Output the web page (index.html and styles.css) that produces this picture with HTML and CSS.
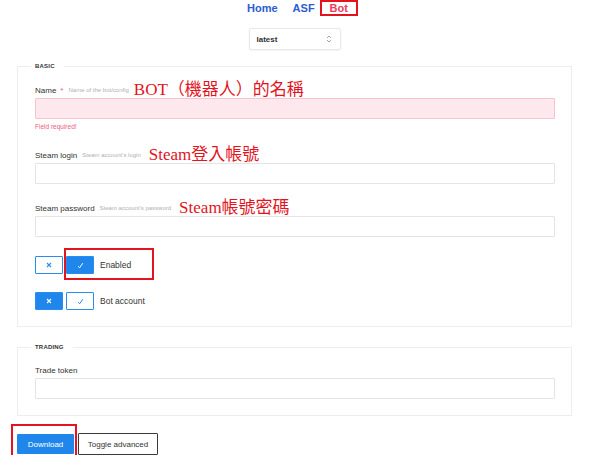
FILE: index.html
```html
<!DOCTYPE html>
<html>
<head>
<meta charset="utf-8">
<link rel="stylesheet" href="styles.css">
</head>
<body>
<div class="page">
  <nav class="nav">
    <a class="nav-link">Home</a>
    <a class="nav-link asf">ASF</a>
    <a class="nav-link active">Bot</a>
  </nav>

  <div class="select">
    <span class="select-text">latest</span>
    <svg class="select-icon" width="6" height="8" viewBox="0 0 6 8"><path d="M1 3 L3 1 L5 3 M1 5 L3 7 L5 5" fill="none" stroke="#9a9a9a" stroke-width="0.9"/></svg>
  </div>

  <fieldset class="group basic">
    <legend class="legend">BASIC</legend>

    <div class="field field-name">
      <div class="label"><span class="label-text">Name</span><span class="star">*</span><span class="hint">Name of the bot/config</span><span class="note">BOT（機器人）的名稱</span></div>
      <input class="input invalid" type="text">
      <div class="error">Field required!</div>
    </div>

    <div class="field field-login">
      <div class="label"><span class="label-text">Steam login</span><span class="hint">Steam account's login</span><span class="note note-steam">Steam登入帳號</span></div>
      <input class="input" type="text">
    </div>

    <div class="field field-pass">
      <div class="label"><span class="label-text">Steam password</span><span class="hint">Steam account's password</span><span class="note note-steam">Steam帳號密碼</span></div>
      <input class="input" type="text">
    </div>

    <div class="toggle-row first">
      <span class="tbtn outline"><svg width="6" height="6" viewBox="0 0 6 6"><path d="M1 1 L5 5 M5 1 L1 5" stroke="#2a8cf0" stroke-width="1.1"/></svg></span>
      <span class="tbtn filled"><svg width="7" height="7" viewBox="0 0 7 7"><path d="M1.2 4.2 L2.6 5.8 L5.8 1.2" fill="none" stroke="#fff" stroke-width="1"/></svg></span>
      <span class="toggle-text">Enabled</span>
      <span class="mark mark-enabled"></span>
    </div>

    <div class="toggle-row">
      <span class="tbtn filled"><svg width="6" height="6" viewBox="0 0 6 6"><path d="M1 1 L5 5 M5 1 L1 5" stroke="#fff" stroke-width="1.1"/></svg></span>
      <span class="tbtn outline"><svg width="7" height="7" viewBox="0 0 7 7"><path d="M1.2 4.2 L2.6 5.8 L5.8 1.2" fill="none" stroke="#2a8cf0" stroke-width="1"/></svg></span>
      <span class="toggle-text">Bot account</span>
    </div>
  </fieldset>

  <fieldset class="group trading">
    <legend class="legend">TRADING</legend>
    <div class="field field-trade">
      <div class="label"><span class="label-text">Trade token</span></div>
      <input class="input" type="text">
    </div>
  </fieldset>

  <div class="actions">
    <div class="download-wrap">
      <button class="btn btn-primary">Download</button>
      <span class="mark mark-download"></span>
    </div>
    <button class="btn btn-outline">Toggle advanced</button>
  </div>
</div>
</body>
</html>
```

FILE: styles.css
```css
body {
  margin: 0;
  background: #fff;
  font-family: "Liberation Sans", Arial, sans-serif;
  color: #333;
}

.page {
  margin-left: 17px;
  width: 555px;
}

.nav {
  display: flex;
  justify-content: center;
  align-items: center;
  height: 16px;
  padding-left: 16px;
}

.nav-link {
  font-size: 11px;
  font-weight: bold;
  color: #2b5cd0;
  line-height: 12px;
}

.asf {
  margin-left: 15px;
}

.active {
  margin-left: 5px;
  color: #ef3a5d;
  border: 2px solid #e3141e;
  padding: 0 8px;
  height: 16px;
  box-sizing: border-box;
}

.select {
  margin: 12px auto 0;
  width: 92px;
  height: 22px;
  box-sizing: border-box;
  border: 1px solid #e8e8e8;
  border-radius: 2px;
  box-shadow: 0 1px 2px rgba(0,0,0,0.05);
  display: flex;
  align-items: center;
  justify-content: space-between;
  padding: 0 8px 0 7px;
}

.select-text {
  font-size: 8px;
  font-weight: bold;
  color: #333;
}

.select-icon {
  display: block;
}

.group {
  margin: 11px 0 0;
  padding: 0 16px 0 17px;
  border: 1px solid #ededed;
  min-width: 0;
}

.basic {
  padding-bottom: 16px;
}

.trading {
  margin-top: 15px;
  padding-bottom: 16px;
}

.legend {
  font-size: 6px;
  font-weight: bold;
  line-height: 10px;
  color: #333;
  padding: 0 9px 0 4px;
  margin-left: -4px;
  letter-spacing: 0.2px;
}

.field-name {
  margin-top: 11px;
}

.field-login {
  margin-top: 15px;
}

.field-pass {
  margin-top: 16px;
}

.field-trade {
  margin-top: 10px;
}

.label {
  display: flex;
  align-items: center;
  height: 16px;
  white-space: nowrap;
}

.label-text {
  font-size: 8px;
  color: #333;
}

.star {
  font-size: 8px;
  color: #f0587c;
  margin-left: 4px;
}

.hint {
  font-size: 6px;
  color: #b0b0b0;
  margin-left: 5px;
}

.note {
  font-family: "Liberation Serif", "Noto Sans CJK TC", serif;
  font-size: 17px;
  color: #e3141e;
  margin-left: 5px;
  line-height: 16px;
}

.note-steam {
  margin-left: 8px;
}

.input {
  display: block;
  width: 100%;
  height: 21px;
  box-sizing: border-box;
  border: 1px solid #e4e4e4;
  border-radius: 1px;
  background: #fff;
  margin: 0;
  padding: 0 6px;
}

.input.invalid {
  background: #fde8ed;
  border-color: #f7c3d0;
}

.error {
  margin-top: 3px;
  height: 10px;
  line-height: 10px;
  font-size: 6.5px;
  color: #ec5a80;
}

.toggle-row {
  position: relative;
  display: flex;
  align-items: center;
  height: 18px;
  margin-top: 18px;
}

.toggle-row.first {
  margin-top: 19px;
}

.tbtn {
  width: 28px;
  height: 18px;
  box-sizing: border-box;
  border: 1px solid #2a8cf0;
  border-radius: 1px;
  display: flex;
  align-items: center;
  justify-content: center;
  margin-right: 3px;
}

.tbtn svg {
  display: block;
}

.tbtn.outline {
  background: #fff;
}

.tbtn.filled {
  background: #1f86ec;
}

.toggle-text {
  font-size: 8.5px;
  color: #333;
  margin-left: 3px;
}

.mark {
  position: absolute;
  border: 2px solid #e3141e;
  box-sizing: border-box;
  pointer-events: none;
}

.mark-enabled {
  left: 29px;
  top: -8px;
  width: 90px;
  height: 32px;
}

.actions {
  display: flex;
  align-items: center;
  margin-top: 17px;
  gap: 4px;
}

.download-wrap {
  position: relative;
  display: flex;
}

.mark-download {
  left: -6px;
  top: -10px;
  width: 66px;
  height: 35px;
}

.btn {
  font-family: "Liberation Sans", Arial, sans-serif;
  font-size: 8px;
  margin: 0;
  border-radius: 1px;
  cursor: pointer;
}

.btn-primary {
  width: 57px;
  height: 20px;
  background: #1f86ec;
  color: #fff;
  border: none;
}

.btn-outline {
  width: 80px;
  height: 22px;
  background: #fff;
  color: #333;
  border: 1px solid #3a3a3a;
}
```
